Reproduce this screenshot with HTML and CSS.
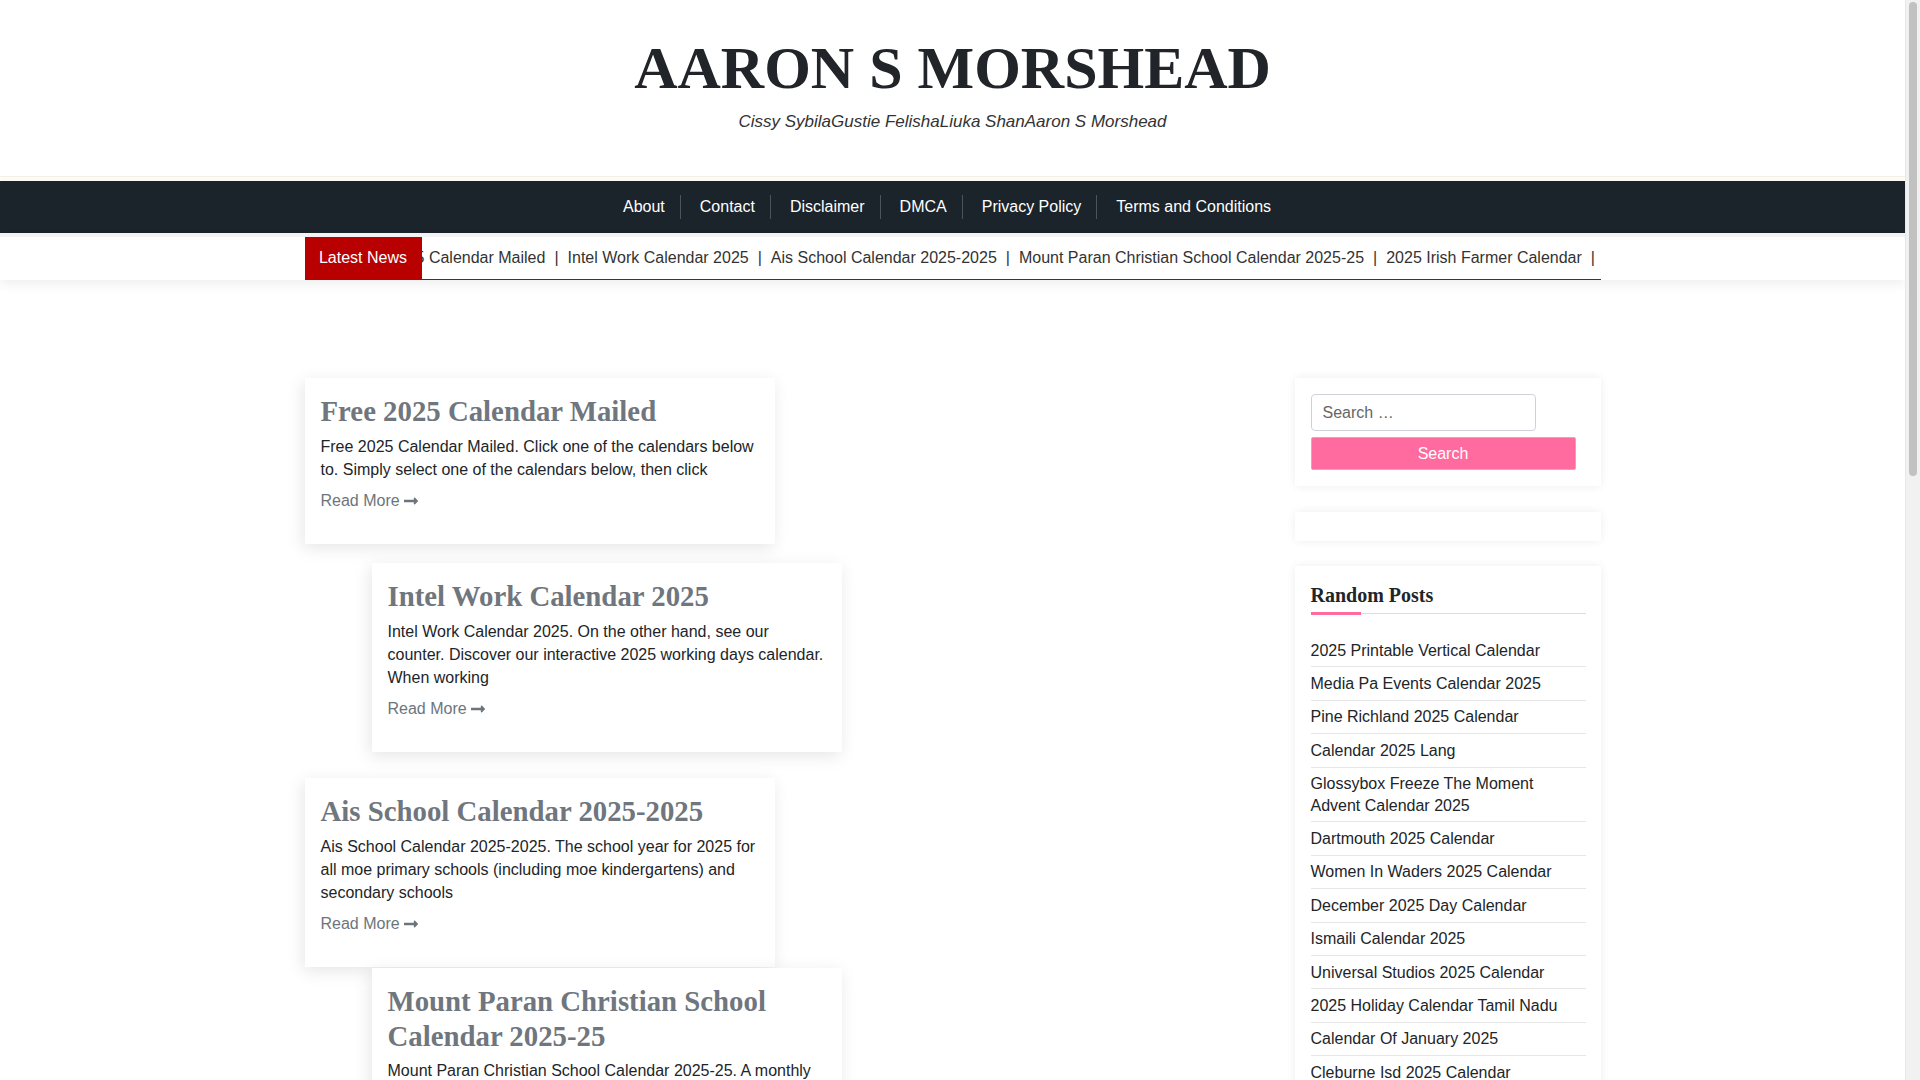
FILE: index.html
```html
<!DOCTYPE html>
<html lang="en">
<head>
<meta charset="utf-8">
<title>AARON S MORSHEAD</title>
<link rel="stylesheet" href="styles.css">
</head>
<body>
<div class="fake-scrollbar"><div class="fake-thumb"></div></div>

<header class="site-header">
  <h1 class="site-title">AARON S MORSHEAD</h1>
  <p class="site-desc">Cissy SybilaGustie FelishaLiuka ShanAaron S Morshead</p>
</header>

<nav class="main-nav">
  <ul class="menu">
    <li><a href="#">About</a></li>
    <li><a href="#">Contact</a></li>
    <li><a href="#">Disclaimer</a></li>
    <li><a href="#">DMCA</a></li>
    <li><a href="#">Privacy Policy</a></li>
    <li><a href="#">Terms and Conditions</a></li>
  </ul>
</nav>

<div class="ticker-wrap">
  <div class="container ticker">
    <span class="ticker-label">Latest News</span>
    <div class="ticker-viewport">
      <div class="ticker-track">
        <a href="#">Free 2025 Calendar Mailed</a><span class="sep">|</span>
        <a href="#">Intel Work Calendar 2025</a><span class="sep">|</span>
        <a href="#">Ais School Calendar 2025-2025</a><span class="sep">|</span>
        <a href="#">Mount Paran Christian School Calendar 2025-25</a><span class="sep">|</span>
        <a href="#">2025 Irish Farmer Calendar</a><span class="sep">|</span>
        <a href="#">Calendar 2025 Lang</a><span class="sep">|</span>
      </div>
    </div>
  </div>
</div>

<div class="container layout">
  <main class="posts">
    <article class="post-card">
      <h2 class="post-title">Free 2025 Calendar Mailed</h2>
      <p class="post-excerpt">Free 2025 Calendar Mailed. Click one of the calendars below to. Simply select one of the calendars below, then click</p>
      <a class="read-more" href="#">Read More <svg class="arrow" viewBox="0 0 448 512" width="14" height="16"><path fill="currentColor" d="M313.941 216H12c-6.627 0-12 5.373-12 12v56c0 6.627 5.373 12 12 12h301.941v46.059c0 21.382 25.851 32.09 40.971 16.971l86.059-86.059c9.373-9.373 9.373-24.569 0-33.941l-86.059-86.059c-15.119-15.119-40.971-4.411-40.971 16.971V216z"/></svg></a>
    </article>
    <article class="post-card shift">
      <h2 class="post-title">Intel Work Calendar 2025</h2>
      <p class="post-excerpt">Intel Work Calendar 2025. On the other hand, see our counter. Discover our interactive 2025 working days calendar. When working</p>
      <a class="read-more" href="#">Read More <svg class="arrow" viewBox="0 0 448 512" width="14" height="16"><path fill="currentColor" d="M313.941 216H12c-6.627 0-12 5.373-12 12v56c0 6.627 5.373 12 12 12h301.941v46.059c0 21.382 25.851 32.09 40.971 16.971l86.059-86.059c9.373-9.373 9.373-24.569 0-33.941l-86.059-86.059c-15.119-15.119-40.971-4.411-40.971 16.971V216z"/></svg></a>
    </article>
    <article class="post-card">
      <h2 class="post-title">Ais School Calendar 2025-2025</h2>
      <p class="post-excerpt">Ais School Calendar 2025-2025. The school year for 2025 for all moe primary schools (including moe kindergartens) and secondary schools</p>
      <a class="read-more" href="#">Read More <svg class="arrow" viewBox="0 0 448 512" width="14" height="16"><path fill="currentColor" d="M313.941 216H12c-6.627 0-12 5.373-12 12v56c0 6.627 5.373 12 12 12h301.941v46.059c0 21.382 25.851 32.09 40.971 16.971l86.059-86.059c9.373-9.373 9.373-24.569 0-33.941l-86.059-86.059c-15.119-15.119-40.971-4.411-40.971 16.971V216z"/></svg></a>
    </article>
    <article class="post-card shift">
      <h2 class="post-title">Mount Paran Christian School Calendar 2025-25</h2>
      <p class="post-excerpt">Mount Paran Christian School Calendar 2025-25. A monthly view of the school year with holidays, breaks and important dates</p>
      <a class="read-more" href="#">Read More <svg class="arrow" viewBox="0 0 448 512" width="14" height="16"><path fill="currentColor" d="M313.941 216H12c-6.627 0-12 5.373-12 12v56c0 6.627 5.373 12 12 12h301.941v46.059c0 21.382 25.851 32.09 40.971 16.971l86.059-86.059c9.373-9.373 9.373-24.569 0-33.941l-86.059-86.059c-15.119-15.119-40.971-4.411-40.971 16.971V216z"/></svg></a>
    </article>
    <article class="post-card">
      <h2 class="post-title">2025 Irish Farmer Calendar</h2>
      <p class="post-excerpt">2025 Irish Farmer Calendar. A full year of farming scenes from around the country, with space to note the days that matter</p>
      <a class="read-more" href="#">Read More <svg class="arrow" viewBox="0 0 448 512" width="14" height="16"><path fill="currentColor" d="M313.941 216H12c-6.627 0-12 5.373-12 12v56c0 6.627 5.373 12 12 12h301.941v46.059c0 21.382 25.851 32.09 40.971 16.971l86.059-86.059c9.373-9.373 9.373-24.569 0-33.941l-86.059-86.059c-15.119-15.119-40.971-4.411-40.971 16.971V216z"/></svg></a>
    </article>
    <article class="post-card shift">
      <h2 class="post-title">Calendar 2025 Lang</h2>
      <p class="post-excerpt">Calendar 2025 Lang. Plan the year ahead with a clear monthly layout and all the public holidays marked</p>
      <a class="read-more" href="#">Read More <svg class="arrow" viewBox="0 0 448 512" width="14" height="16"><path fill="currentColor" d="M313.941 216H12c-6.627 0-12 5.373-12 12v56c0 6.627 5.373 12 12 12h301.941v46.059c0 21.382 25.851 32.09 40.971 16.971l86.059-86.059c9.373-9.373 9.373-24.569 0-33.941l-86.059-86.059c-15.119-15.119-40.971-4.411-40.971 16.971V216z"/></svg></a>
    </article>
    <article class="post-card">
      <h2 class="post-title">Dartmouth 2025 Calendar</h2>
      <p class="post-excerpt">Dartmouth 2025 Calendar. Term dates, reading periods and final examinations for the academic year</p>
      <a class="read-more" href="#">Read More <svg class="arrow" viewBox="0 0 448 512" width="14" height="16"><path fill="currentColor" d="M313.941 216H12c-6.627 0-12 5.373-12 12v56c0 6.627 5.373 12 12 12h301.941v46.059c0 21.382 25.851 32.09 40.971 16.971l86.059-86.059c9.373-9.373 9.373-24.569 0-33.941l-86.059-86.059c-15.119-15.119-40.971-4.411-40.971 16.971V216z"/></svg></a>
    </article>
  </main>

  <aside class="sidebar">
    <section class="widget search-widget">
      <form class="search-form">
        <input class="search-field" type="search" placeholder="Search …">
        <button class="search-submit" type="button">Search</button>
      </form>
    </section>
    <section class="widget empty-widget"></section>
    <section class="widget posts-widget">
      <h3 class="widget-title">Random Posts</h3>
      <ul class="post-list">
        <li><a href="#">2025 Printable Vertical Calendar</a></li>
        <li><a href="#">Media Pa Events Calendar 2025</a></li>
        <li><a href="#">Pine Richland 2025 Calendar</a></li>
        <li><a href="#">Calendar 2025 Lang</a></li>
        <li><a href="#">Glossybox Freeze The Moment Advent Calendar 2025</a></li>
        <li><a href="#">Dartmouth 2025 Calendar</a></li>
        <li><a href="#">Women In Waders 2025 Calendar</a></li>
        <li><a href="#">December 2025 Day Calendar</a></li>
        <li><a href="#">Ismaili Calendar 2025</a></li>
        <li><a href="#">Universal Studios 2025 Calendar</a></li>
        <li><a href="#">2025 Holiday Calendar Tamil Nadu</a></li>
        <li><a href="#">Calendar Of January 2025</a></li>
        <li><a href="#">Cleburne Isd 2025 Calendar</a></li>
        <li><a href="#">2025 Irish Farmer Calendar</a></li>
        <li><a href="#">Intel Work Calendar 2025</a></li>
      </ul>
    </section>
  </aside>
</div>

<footer class="site-footer">
  <div class="container footer-inner">Copyright &copy; 2025 Aaron S Morshead</div>
</footer>
</body>
</html>
```

FILE: styles.css
```css
* { box-sizing: border-box; }

html, body {
  margin: 0;
  padding: 0;
  background: #fff;
}

body {
  font-family: "Liberation Sans", Arial, sans-serif;
  font-size: 16px;
  color: #212529;
  padding-right: 15px;
}

a { text-decoration: none; color: inherit; }

/* Scrollbar drawn over the right edge, as in the reference capture */
.fake-scrollbar {
  position: fixed;
  top: 0;
  right: 0;
  width: 15px;
  height: 100vh;
  background: #f1f1f1;
  border-left: 1px solid #e8e8e8;
  z-index: 10;
}

.fake-thumb {
  margin: 2px 3px 0 3px;
  height: 474px;
  background: #c1c1c1;
  border-radius: 5px;
}

.container {
  width: 1296px;
  margin: 0 auto;
}

/* Header */
.site-header {
  text-align: center;
  padding: 32px 0 41px;
  border-bottom: 1px solid #f6f1e2;
}

.site-title {
  margin: 0;
  font-family: "Liberation Serif", "Times New Roman", serif;
  font-weight: 700;
  font-size: 60px;
  line-height: 72px;
  color: #212529;
}

.site-desc {
  margin: 4px 0 0;
  font-style: italic;
  font-size: 17px;
  line-height: 27px;
  color: #333;
}

/* Nav */
.main-nav {
  margin-top: 4px;
  background: #1b232b;
  height: 52px;
  box-shadow: 0 -4px 4px rgba(0, 0, 0, 0.025);
}

.menu {
  list-style: none;
  margin: 0;
  padding: 0 15px 0 0;
  height: 52px;
  display: flex;
  justify-content: center;
  align-items: center;
}

.menu li {
  line-height: 24px;
}

.menu li + li {
  border-left: 1px solid rgba(255, 255, 255, 0.22);
}

.menu a {
  display: block;
  color: #fff;
  padding: 0 15px 0 19px;
}

/* Ticker */
.ticker-wrap {
  border-top: 4px solid #f3f3f3;
  background: #fff;
  box-shadow: 0 5px 10px rgba(0, 0, 0, 0.06);
}

.ticker {
  display: flex;
  height: 43px;
  border-bottom: 1px solid #b80000;
}

.ticker-label {
  flex: none;
  width: 117px;
  background: #b80000;
  color: #fff;
  line-height: 42px;
  text-align: center;
  position: relative;
  z-index: 1;
}

.ticker-viewport {
  flex: 1;
  overflow: hidden;
}

.ticker-track {
  margin-left: -70px;
  white-space: nowrap;
  line-height: 42px;
  color: #333;
  display: flex;
}

.ticker-track .sep {
  padding: 0 9px;
}

/* Layout */
.layout {
  margin-top: 98px;
  display: grid;
  grid-template-columns: 966px 306px;
  column-gap: 24px;
  align-items: start;
}

.post-card {
  width: 470px;
  background: #fff;
  padding: 16px 16px 31px;
  box-shadow: -2px 4px 16px rgba(0, 0, 0, 0.1);
}

.post-card.shift {
  margin-left: 67px;
}

.post-card + .post-card { margin-top: 22px; }
.post-card:nth-child(2) { margin-top: 19px; }
.post-card:nth-child(3) { margin-top: 26px; }
.post-card:nth-child(4) { margin-top: 1px; }

.post-title {
  margin: 0 0 6px;
  font-family: "Liberation Serif", "Times New Roman", serif;
  font-weight: 700;
  font-size: 28.8px;
  line-height: 1.2;
  color: #6f767e;
}

.post-excerpt {
  margin: 0 0 8px;
  line-height: 23.2px;
  color: #212529;
}

.read-more {
  display: inline-flex;
  align-items: center;
  line-height: 24px;
  color: #6c757d;
}

.read-more .arrow {
  margin-left: 4px;
}

/* Sidebar */
.widget {
  background: #fff;
  box-shadow: 0 0 9px rgba(0, 0, 0, 0.07);
  padding: 16px 15px 16px 16px;
}

.search-field {
  display: block;
  width: 225.5px;
  height: 37px;
  margin: 0;
  padding: 0 11px;
  border: 1px solid #cfd3d7;
  border-radius: 4px;
  font-family: "Liberation Sans", Arial, sans-serif;
  font-size: 16px;
  color: #333;
  background: #fff;
}

.search-field::placeholder {
  color: #666;
}

.search-submit {
  display: block;
  width: 265px;
  height: 33px;
  margin: 6px 0 0;
  padding: 0;
  background: #ff6b9e;
  border: 1px solid #b9b9b9;
  border-radius: 2px;
  color: #fff;
  font-family: "Liberation Sans", Arial, sans-serif;
  font-size: 16px;
}

.empty-widget {
  margin-top: 26px;
  height: 29px;
  padding: 0;
}

.posts-widget {
  margin-top: 25px;
  padding-top: 17px;
}

.widget-title {
  position: relative;
  margin: 0;
  padding-bottom: 6px;
  border-bottom: 1px solid #dedede;
  font-family: "Liberation Serif", "Times New Roman", serif;
  font-weight: 700;
  font-size: 20px;
  line-height: 24px;
  color: #212529;
}

.widget-title::after {
  content: "";
  position: absolute;
  left: 0;
  bottom: -2px;
  width: 50px;
  height: 3px;
  background: #ff6b9e;
}

.post-list {
  list-style: none;
  margin: 20px 0 0;
  padding: 0;
}

.post-list li {
  padding: 5.5px 0;
  line-height: 21.4px;
  border-bottom: 1px solid #e6e6e6;
  color: #212529;
}

/* Footer */
.site-footer {
  margin-top: 80px;
  background: #1b232b;
  color: #ccc;
}

.footer-inner {
  padding: 24px 0;
  text-align: center;
  font-size: 15px;
}
```
